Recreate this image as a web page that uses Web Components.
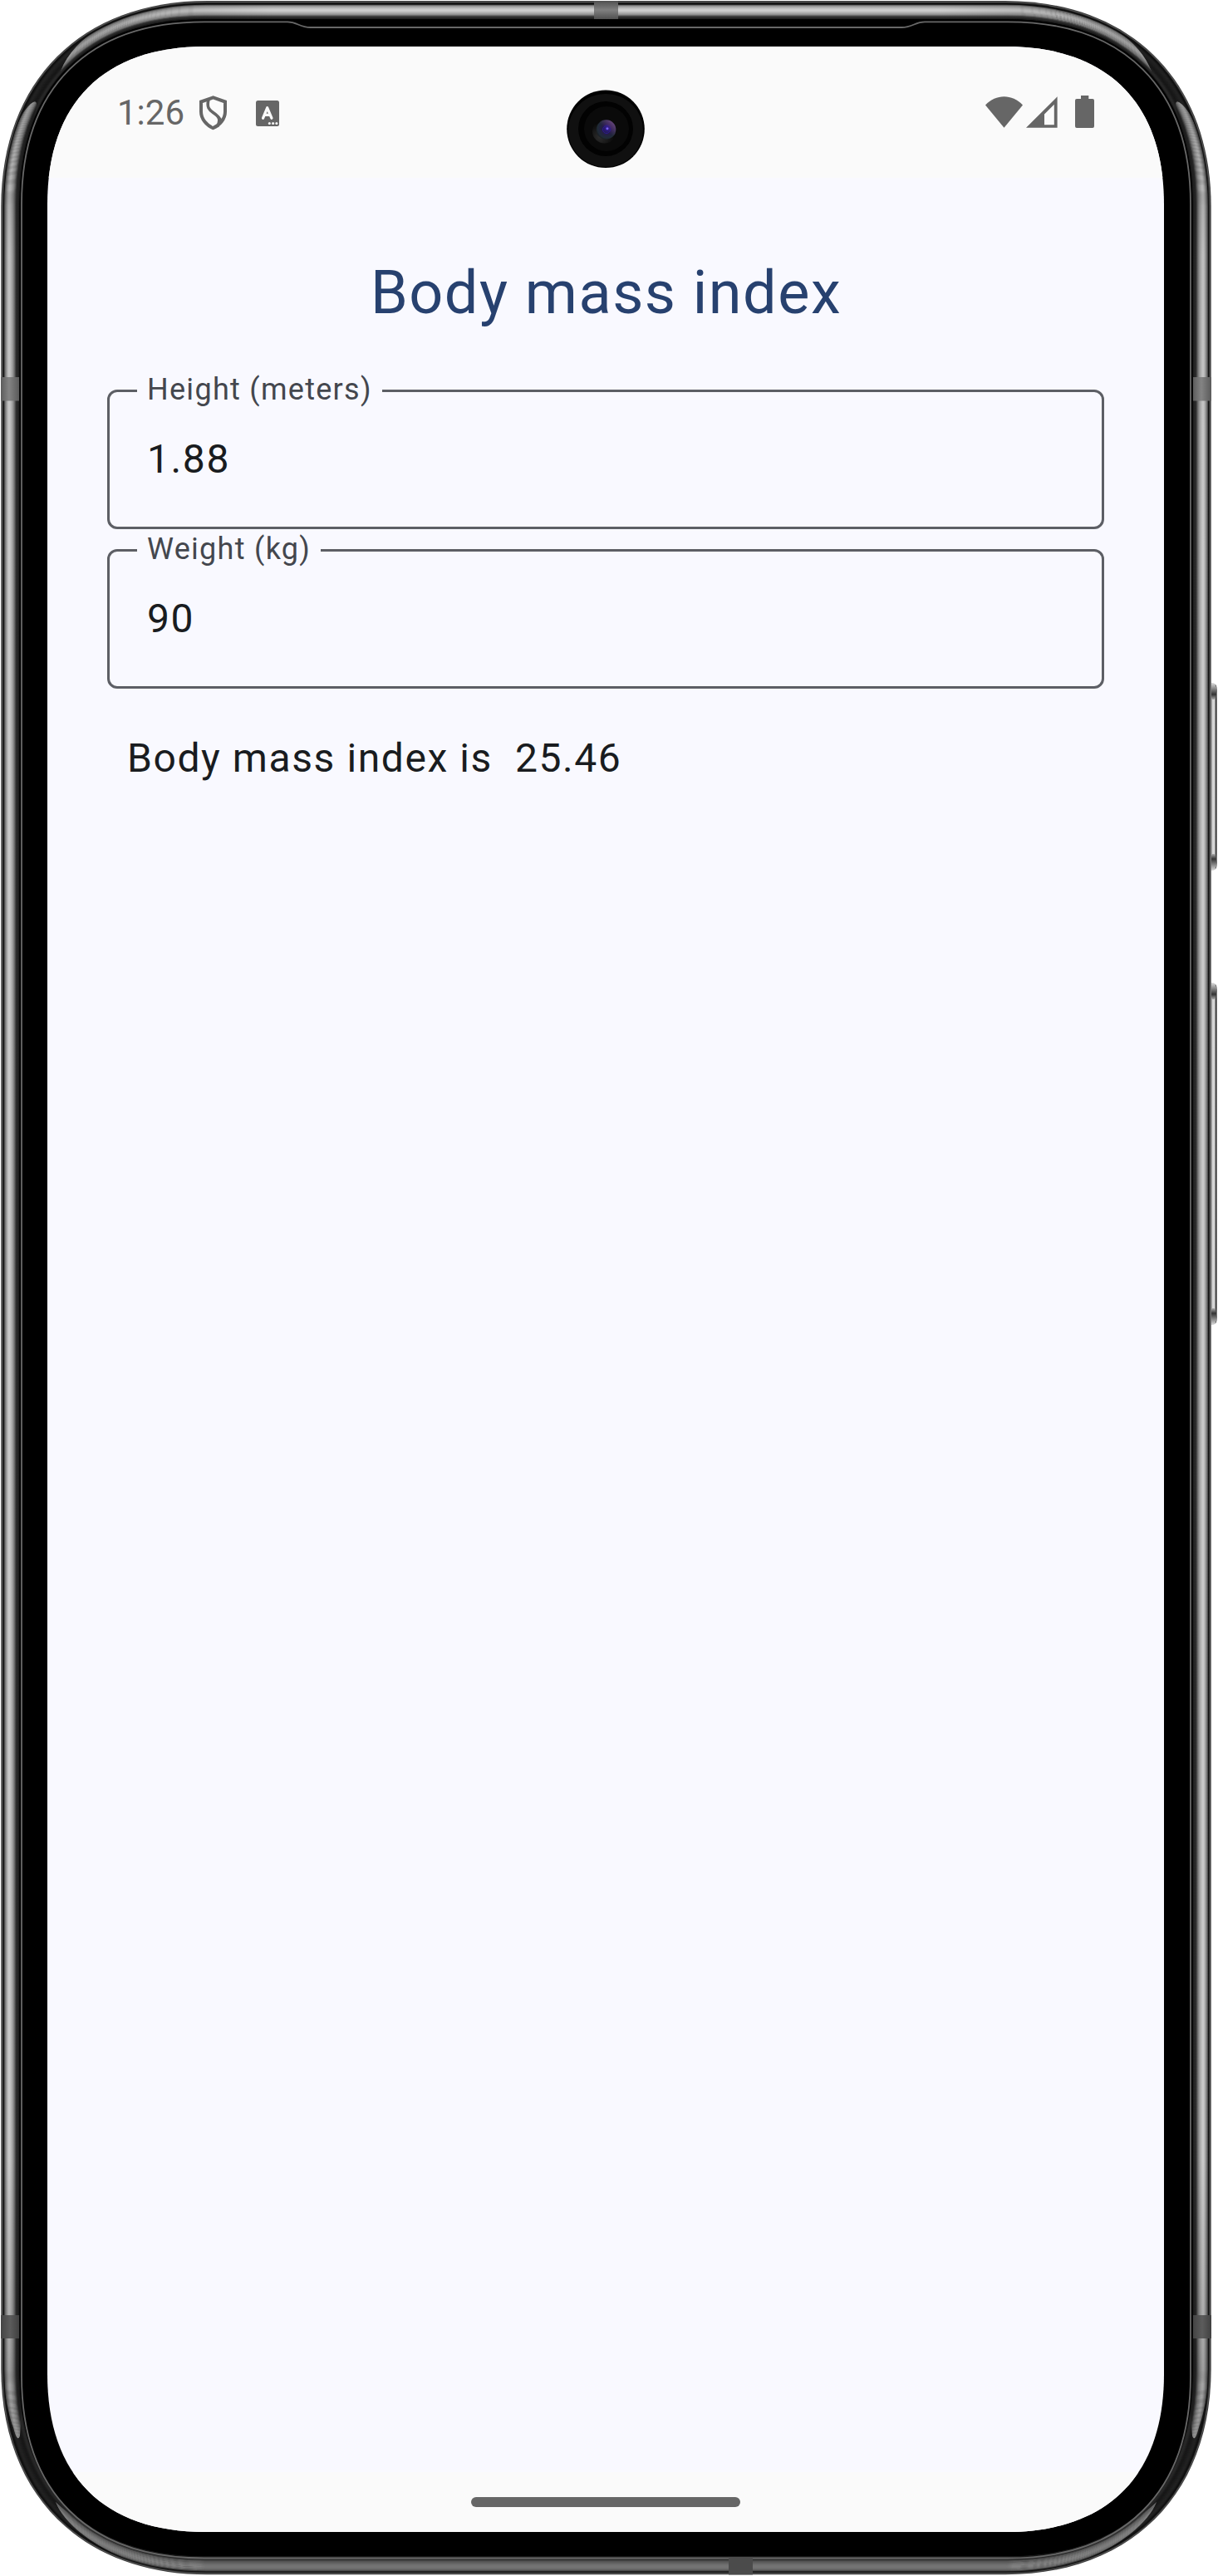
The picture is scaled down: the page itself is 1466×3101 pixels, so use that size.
<!DOCTYPE html>
<html lang="en">
<head>
<meta charset="utf-8">
<title>Body mass index</title>
<style>
html,body{margin:0;background:#fff}
body{font-family:Roboto,"Liberation Sans",sans-serif}
</style>
</head>
<body>
<phone-device>
  <status-bar time="1:26"></status-bar>
  <bmi-screen></bmi-screen>
  <nav-bar></nav-bar>
</phone-device>
<script>
const define=(name,html,setup)=>customElements.define(name,class extends HTMLElement{
  constructor(){super();this.attachShadow({mode:'open'}).innerHTML=html;}
  connectedCallback(){if(setup)setup(this,this.shadowRoot);}
});

// Closed outline of a rounded box with smoothed corners.
function outline(l,t,r,b,R,k){
  const c=R*(1-k);
  return `M${l},${t+R}C${l},${t+c} ${l+c},${t} ${l+R},${t}H${r-R}C${r-c},${t} ${r},${t+c} ${r},${t+R}V${b-R}C${r},${b-c} ${r-c},${b} ${r-R},${b}H${l+R}C${l+c},${b} ${l},${b-c} ${l},${b-R}Z`;
}
function ring(i){
  const f=i/24;
  return outline(1.3+i,1+i,1457.7-i,3099.3-i,248-28*f,.61+.027*f);
}

// Metal chassis: concentric rings, then polished highlights over each side.
define('phone-frame',`<style>:host{display:block;position:absolute;inset:0;pointer-events:none}svg{display:block}</style>
<svg width="1466" height="3101" viewBox="0 0 1466 3101"></svg>`,(el,root)=>{
  const base=[60,88,34,14,18,26,32,34,34,32,30,28,26,24,24,26,30,36,40,40,36,20,0,0,0];
  const side=[null,null,null,null,95,130,158,182,204,216,216,206,194,180,162,138,110,76,46,40,38,30];
  const top=[null,null,null,null,null,100,145,162,178,192,202,206,202,190,176,162,150,120,75,50,45,30];
  const bottom=[null,null,null,null,60,100,112,120,126,130,128,126,120,114,106,98,90,64,44,52,28,24];
  const shade=v=>`rgb(${Math.round(v)},${Math.round(v)},${Math.round(v)})`;
  let defs='',out='';
  const halfSide='M-6,1500V260C3,200 18,136 40,123Q46,120 43,133C36,158 30,180 28,240V2820C28,2860 26,2900 24,2932Q21,2942 16,2922C8,2900 4,2870 -6,2810Z';
  defs+=`<clipPath id="cl"><path d="${halfSide}"/></clipPath><clipPath id="cr"><path transform="translate(1459 0) scale(-1 1)" d="${halfSide}"/></clipPath>`;
  defs+=`<clipPath id="ct"><path d="M250,-5C160,4 92,36 73,86Q96,72 130,62L250,60H1209L1329,62Q1363,72 1386,86C1367,36 1299,4 1209,-5Z"/></clipPath>`;
  defs+=`<clipPath id="cb"><path d="M250,3106C160,3096 84,3054 67,3012Q96,3040 140,3048L250,3060H1209L1319,3048Q1363,3040 1392,3012C1375,3054 1299,3096 1209,3106Z"/></clipPath>`;
  base.forEach((v,i)=>out+=`<path d="${ring(i)}" fill="${shade(v)}"/>`);
  let L='',T='',B='';
  side.forEach((v,i)=>{ if(v===null)return;
    defs+=`<linearGradient id="s${i}" gradientUnits="userSpaceOnUse" x1="0" x2="0" y1="110" y2="2940"><stop offset="0" stop-color="${shade(v*.68)}"/><stop offset=".07" stop-color="${shade(v*.95)}"/><stop offset=".2" stop-color="${shade(v)}"/><stop offset=".88" stop-color="${shade(v)}"/><stop offset=".96" stop-color="${shade(v*.82)}"/><stop offset="1" stop-color="${shade(v*.66)}"/></linearGradient>`;
    L+=`<path d="${ring(i+.5)}" fill="none" stroke-width="1.3" stroke="url(#s${i})"/>`;});
  top.forEach((v,i)=>{ if(v===null)return;
    defs+=`<linearGradient id="t${i}" gradientUnits="userSpaceOnUse" x1="60" x2="1399" y1="0" y2="0"><stop offset="0" stop-color="${shade(v*.74)}"/><stop offset=".2" stop-color="${shade(v)}"/><stop offset=".8" stop-color="${shade(v)}"/><stop offset="1" stop-color="${shade(v*.74)}"/></linearGradient>`;
    T+=`<path d="${ring(i+.5)}" fill="none" stroke-width="1.3" stroke="url(#t${i})"/>`;});
  bottom.forEach((v,i)=>{ if(v===null)return; B+=`<path d="${ring(i+.5)}" fill="none" stroke-width="1.3" stroke="${shade(v)}"/>`;});
  out+=`<g clip-path="url(#cl)">${L}</g><g clip-path="url(#cr)">${L}</g><g clip-path="url(#ct)">${T}</g><g clip-path="url(#cb)">${B}</g>`;
  out+=`<path d="${ring(22.3)}" fill="#000"/>`;
  // Thin seam around the glass, with the earpiece step along the top edge.
  out+=`<path fill="none" stroke="#686868" stroke-width="1.8" d="M26,246C26,106 106,26.3 246,26.3H346C358,26.3 360,33 374,33H1085C1099,33 1101,26.3 1113,26.3H1213C1353,26.3 1433,106 1433,246V2860C1433,3000 1353,3079.5 1213,3079.5H246C106,3079.5 26,3000 26,2860Z"/>`;
  defs+=`<linearGradient id="ah"><stop offset="0" stop-color="#5c5c5c"/><stop offset=".45" stop-color="#848484"/><stop offset="1" stop-color="#5a5a5a"/></linearGradient><linearGradient id="av" x2="0" y2="1"><stop offset="0" stop-color="#505050"/><stop offset=".5" stop-color="#808080"/><stop offset="1" stop-color="#505050"/></linearGradient><linearGradient id="ad"><stop offset="0" stop-color="#444"/><stop offset=".5" stop-color="#5c5c5c"/><stop offset="1" stop-color="#404040"/></linearGradient>`;
  out+=`<rect x="1" y="454" width="22" height="28.5" fill="url(#ah)"/><rect x="1436" y="454" width="22" height="28.5" fill="url(#ah)"/><rect x="1" y="2787" width="22" height="28" fill="url(#ad)"/><rect x="1436" y="2787" width="22" height="28" fill="url(#ad)"/><rect x="715" y="1" width="29" height="22" fill="url(#av)"/><rect x="877" y="3078" width="29" height="21.5" fill="#4b4b4b"/>`;
  // Power and volume keys.
  defs+=`<linearGradient id="k"><stop offset="0" stop-color="#8a8a8a"/><stop offset=".25" stop-color="#e0e0e0"/><stop offset=".6" stop-color="#c8c8c8"/><stop offset=".78" stop-color="#333"/><stop offset="1" stop-color="#999"/></linearGradient><linearGradient id="ke" x2="0" y2="1"><stop offset="0" stop-color="#ddd"/><stop offset=".35" stop-color="#888"/><stop offset=".7" stop-color="#333"/><stop offset="1" stop-color="#aaa"/></linearGradient>`;
  for(const [y,b] of [[822,1048],[1183,1595]])
    out+=`<path d="M1458,${y}Q1465,${y} 1465,${y+9}V${b-9}Q1465,${b} 1458,${b}Z" fill="url(#k)"/><path d="M1458,${y}Q1464,${y} 1464.5,${y+9}L1463,${y+20}H1458Z" fill="url(#ke)"/><path transform="translate(0 ${b}) scale(1 -1)" d="M1458,0Q1464,0 1464.5,9L1463,20H1458Z" fill="url(#ke)"/>`;
  root.querySelector('svg').innerHTML=`<defs>${defs}</defs>${out}`;
});

define('front-camera',`<style>:host{display:block;width:94px;height:95px}svg{display:block}</style>
<svg width="94" height="95" viewBox="0 0 94 95"><defs>
<radialGradient id="lens" cx=".55" cy=".45" r=".6"><stop offset="0" stop-color="#4a30d0"/><stop offset=".15" stop-color="#2a1a80"/><stop offset=".4" stop-color="#241c48"/><stop offset=".8" stop-color="#202b36"/><stop offset="1" stop-color="#15191c"/></radialGradient>
<linearGradient id="tint" x1="0" y1="1" x2="1" y2="0"><stop offset=".5" stop-color="#8a4aa0" stop-opacity="0"/><stop offset="1" stop-color="#b06ac0" stop-opacity=".7"/></linearGradient>
<radialGradient id="glow" cx=".3" cy=".75" r=".6"><stop offset="0" stop-color="#2c2c2c"/><stop offset="1" stop-color="#090909"/></radialGradient></defs>
<circle cx="47" cy="47.3" r="46.8"/><ellipse cx="47" cy="49" rx="45" ry="44" fill="#101010"/>
<circle cx="47" cy="47" r="33" fill="#020202"/><circle cx="48" cy="47" r="27" fill="#0a0a0a"/>
<circle cx="45.5" cy="50" r="14.5" fill="url(#glow)"/><circle cx="47.5" cy="48" r="11.8" fill="url(#lens)"/><circle cx="47.5" cy="48" r="11.8" fill="url(#tint)"/>
<circle cx="48" cy="48" r="4.5" fill="none" stroke="#2c1a90" stroke-width="1"/><circle cx="49" cy="46.8" r="1.4" fill="#7a62f0"/></svg>`);

define('phone-device',`<style>
:host{display:block;position:relative;box-sizing:border-box;width:1466px;height:3101px;padding:56px 65px 53px 57px;overflow:hidden}
.glass{position:relative;width:1344px;height:2992px;display:flex;flex-direction:column;background:#f9f9ff}
front-camera{position:absolute;left:625px;top:52px}
</style><phone-frame></phone-frame><div class="glass"><slot></slot><front-camera></front-camera></div>`,(el,root)=>{
  root.querySelector('.glass').style.clipPath=`path("${outline(0,0,1344,2992,190,.643)}")`;
});

define('status-bar',`<style>
:host{display:flex;justify-content:space-between;box-sizing:border-box;height:158px;flex:none;padding:55px 84px 0 84px;background:#fafafa;color:#666}
.l,.r{display:flex;height:50px;align-items:center}
.r{height:47px}
.t{font-size:42px;line-height:50px;width:80px;white-space:nowrap}
svg{display:block;fill:#666}
.shield{margin-left:18px}.kb{margin-left:34px}.sig{margin-left:4px}.bat{margin-left:21px}
</style>
<div class="l"><span class="t"></span>
<svg class="shield" width="35" height="42" viewBox="0 0 35 42"><path d="M17.5 2.4 32 7.5V19.5C32 28.5 25 36 17.5 39.2C10 36 3 28.5 3 19.5V7.5Z" fill="none" stroke="#666" stroke-width="4"/><path d="M12 5C9.5 14 13 17.5 17.5 20.5C25 25.5 27 29 22.5 37.5" fill="none" stroke="#666" stroke-width="3.6"/><path d="M24 23.5 27.8 28 31 24 28 31 21 38 25 31Z"/></svg>
<svg class="kb" width="28" height="31" viewBox="0 0 28 31"><rect width="28" height="31" rx="2.5"/><path d="M8.6 21.2 13.7 8.8 18.9 21.2M10.5 17.3H17" fill="none" stroke="#fafafa" stroke-width="3.3" stroke-linecap="round" stroke-linejoin="round"/><g fill="#fafafa"><circle cx="16.3" cy="27.4" r="1.5"/><circle cx="20.6" cy="27.4" r="1.5"/><circle cx="24.9" cy="27.4" r="1.5"/></g></svg></div>
<div class="r"><svg width="45" height="38" viewBox="0 0 45 38"><path d="M0 10.4C13-3.1 32-3.1 45 10.4L22.5 37.8Z"/></svg>
<svg class="sig" width="38" height="38" viewBox="0 0 38 38"><path fill-rule="evenodd" d="M0 37.8 37.6 .3V37.8ZM22 34.3H33.8V9.8L22 21.5Z"/></svg>
<svg class="bat" width="23" height="39" viewBox="0 0 23 39"><path d="M7 0H16.3V4H21Q23 4 23 6V37Q23 39 21 39H2Q0 39 0 37V6Q0 4 2 4H7Z"/></svg></div>`,(el,root)=>{
  root.querySelector('.t').textContent=el.getAttribute('time');
});

define('outlined-field',`<style>
:host{display:block;position:relative;box-sizing:border-box;height:168px;padding:45px;border:3px solid #5d5f65;border-radius:12px}
label{position:absolute;left:33px;top:-27px;padding:0 12px;font-size:36px;line-height:48px;letter-spacing:1.29px;background:#f9f9ff;color:#44474e;white-space:nowrap}
.v{font-size:48px;line-height:72px;letter-spacing:1.6px;color:#191c20}
</style><label></label><div class="v"><slot></slot></div>`,(el,root)=>{
  root.querySelector('label').textContent=el.getAttribute('label');
});

define('bmi-screen',`<style>
:host{display:flex;flex-direction:column;gap:24px;flex:1;padding:91px 72px 0;color:#191c20}
h1{margin:0 0 44px;text-align:center;font-weight:400;font-size:72px;line-height:96px;letter-spacing:1.5px;color:#27416f;text-indent:1px}
p{margin:24px 0 0;padding:0 24px;font-size:48px;line-height:72px;letter-spacing:1.58px;white-space:pre}
</style><h1>Body mass index</h1>
<outlined-field label="Height (meters)">1.88</outlined-field>
<outlined-field label="Weight (kg)">90</outlined-field>
<p>Body mass index is  25.46</p>`);

define('nav-bar',`<style>
:host{display:flex;justify-content:center;align-items:center;height:72px;flex:none;background:#fafafa}
i{display:block;width:324px;height:12px;border-radius:6px;background:#666}
</style><i></i>`);
</script>
</body>
</html>
